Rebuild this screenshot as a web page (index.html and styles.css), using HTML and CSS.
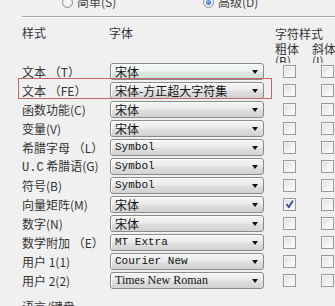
FILE: index.html
```html
<!DOCTYPE html>
<html>
<head>
<meta charset="utf-8">
<link rel="stylesheet" href="styles.css">
</head>
<body>
<div class="page">
  <div class="radios">
    <label class="radio"><span class="dot"></span>简单(S)</label>
    <label class="radio"><span class="dot on"></span>高级(D)</label>
  </div>
  <div class="rule"></div>
  <div class="header">
    <div class="h-label">样式</div>
    <div class="h-font">字体</div>
    <div class="h-char">
      <div class="h-title">字符样式</div>
      <div class="h-sub">
        <div class="h-col">粗体<br>(B)</div>
        <div class="h-col">斜体<br>(I)</div>
      </div>
    </div>
  </div>
  <div class="rows">
    <div class="row"><span class="lbl">文本 （T）</span><span class="sel hover">宋体<i class="arr"></i></span><span class="cb"></span><span class="cb"></span></div>
    <div class="row"><span class="lbl">文本 （FE）</span><span class="sel">宋体-方正超大字符集<i class="arr"></i></span><span class="cb"></span><span class="cb"></span></div>
    <div class="row"><span class="lbl">函数功能(C)</span><span class="sel">宋体<i class="arr"></i></span><span class="cb"></span><span class="cb"></span></div>
    <div class="row"><span class="lbl">变量(V)</span><span class="sel">宋体<i class="arr"></i></span><span class="cb"></span><span class="cb"></span></div>
    <div class="row"><span class="lbl">希腊字母 （L）</span><span class="sel mono">Symbol<i class="arr"></i></span><span class="cb"></span><span class="cb"></span></div>
    <div class="row"><span class="lbl"><span class="lat">U.C</span> 希腊语(G)</span><span class="sel mono">Symbol<i class="arr"></i></span><span class="cb"></span><span class="cb"></span></div>
    <div class="row"><span class="lbl">符号(B)</span><span class="sel mono">Symbol<i class="arr"></i></span><span class="cb"></span><span class="cb"></span></div>
    <div class="row"><span class="lbl">向量矩阵(M)</span><span class="sel">宋体<i class="arr"></i></span><span class="cb checked"><svg viewBox="0 0 11 11" width="11" height="11"><path d="M3 5.5 L4.8 8.2 L8.6 2.2" fill="none" stroke="#3a4f9e" stroke-width="1.8" stroke-linecap="round" stroke-linejoin="round"/></svg></span><span class="cb"></span></div>
    <div class="row"><span class="lbl">数字(N)</span><span class="sel">宋体<i class="arr"></i></span><span class="cb"></span><span class="cb"></span></div>
    <div class="row"><span class="lbl">数学附加 （E）</span><span class="sel mono">MT Extra<i class="arr"></i></span><span class="cb"></span><span class="cb"></span></div>
    <div class="row"><span class="lbl">用户 1(1)</span><span class="sel mono">Courier New<i class="arr"></i></span><span class="cb"></span><span class="cb"></span></div>
    <div class="row"><span class="lbl">用户 2(2)</span><span class="sel serif">Times New Roman<i class="arr"></i></span><span class="cb"></span><span class="cb"></span></div>
  </div>
  <div class="footer">语言/键盘</div>
  <div class="highlight"></div>
</div>
</body>
</html>
```
FILE: styles.css
```css
html, body {
  margin: 0;
  padding: 0;
}
body {
  width: 335px;
  height: 306px;
  overflow: hidden;
  background: #f0f0f0;
  font-family: "Noto Sans CJK SC", "Liberation Sans", sans-serif;
  font-size: 12px;
  color: #333333;
}
.page {
  position: relative;
  width: 335px;
  height: 306px;
  overflow: hidden;
}
.radios {
  display: flex;
  height: 14px;
  margin-top: -5px;
  padding-left: 62px;
  align-items: center;
}
.radio {
  display: flex;
  align-items: center;
  gap: 4px;
  line-height: 14px;
  color: #444;
}
.radio:first-child {
  width: 141px;
}
.dot {
  width: 11px;
  height: 11px;
  border-radius: 50%;
  border: 1px solid #8f8f8f;
  background: radial-gradient(circle, #ffffff 0%, #e4e4e4 100%);
  box-sizing: border-box;
  position: relative;
}
.dot.on::after {
  content: "";
  position: absolute;
  left: 2px;
  top: 2px;
  width: 5px;
  height: 5px;
  border-radius: 50%;
  background: radial-gradient(circle at 40% 40%, #7fb2ee 0%, #1c5cc2 100%);
}
.rule {
  margin: 7px 0 0 22px;
  height: 1px;
  background: #a9a9a9;
  border-bottom: 1px solid #ffffff;
}
.header {
  display: flex;
  height: 45px;
  padding-left: 22px;
  overflow: hidden;
}
.h-label {
  width: 88px;
  padding-top: 8px;
  line-height: 14px;
}
.h-font {
  width: 168px;
  padding-top: 8px;
  line-height: 14px;
}
.h-char {
  width: 60px;
  padding-top: 9px;
  white-space: nowrap;
}
.h-title {
  line-height: 14px;
}
.h-sub {
  display: flex;
  margin-top: 2px;
}
.h-col {
  width: 37px;
  line-height: 12px;
  flex-shrink: 0;
}
.rows {
  display: flex;
  flex-direction: column;
  gap: 2px;
  padding-left: 22px;
}
.row {
  display: flex;
  align-items: center;
  height: 17px;
}
.lbl {
  width: 88px;
  white-space: nowrap;
  line-height: 17px;
}
.lat {
  font-family: "Liberation Mono", monospace;
  font-size: 12px;
}
.sel {
  position: relative;
  box-sizing: border-box;
  width: 154px;
  height: 17px;
  border: 1px solid #8a8a8a;
  border-radius: 3px;
  padding-left: 4px;
  line-height: 15px;
  color: #111;
  background: linear-gradient(to bottom, #f4f4f4 0%, #ececec 45%, #dfdfdf 55%, #d2d2d2 100%);
  box-shadow: inset 1px 1px 0 #ffffff;
}
.sel.hover {
  background: linear-gradient(to bottom, #f6faf8 0%, #eef5f1 45%, #dbe9e1 55%, #cfe0d8 100%);
}
.sel.mono {
  font-family: "Liberation Mono", monospace;
  font-size: 11px;
}
.sel.serif {
  font-family: "Liberation Serif", serif;
  font-size: 12px;
}
.arr {
  position: absolute;
  right: 5px;
  top: 6px;
  width: 0;
  height: 0;
  border-left: 3.5px solid transparent;
  border-right: 3.5px solid transparent;
  border-top: 4px solid #111;
}
.cb {
  box-sizing: border-box;
  width: 13px;
  height: 13px;
  border: 1px solid #9a9a9a;
  background: linear-gradient(135deg, #dcdcdc 0%, #f4f4f4 60%, #ffffff 100%);
  box-shadow: inset 0 0 0 1px #f6f6f6;
  margin-left: 19px;
  display: flex;
  align-items: center;
  justify-content: center;
  flex-shrink: 0;
}
.cb + .cb {
  margin-left: 25px;
}
.footer {
  padding-left: 22px;
  margin-top: 11px;
  line-height: 14px;
}
.highlight {
  position: absolute;
  left: 18px;
  top: 78px;
  width: 254px;
  height: 21px;
  border: 1px solid #c9646a;
  box-sizing: border-box;
  pointer-events: none;
}
```
